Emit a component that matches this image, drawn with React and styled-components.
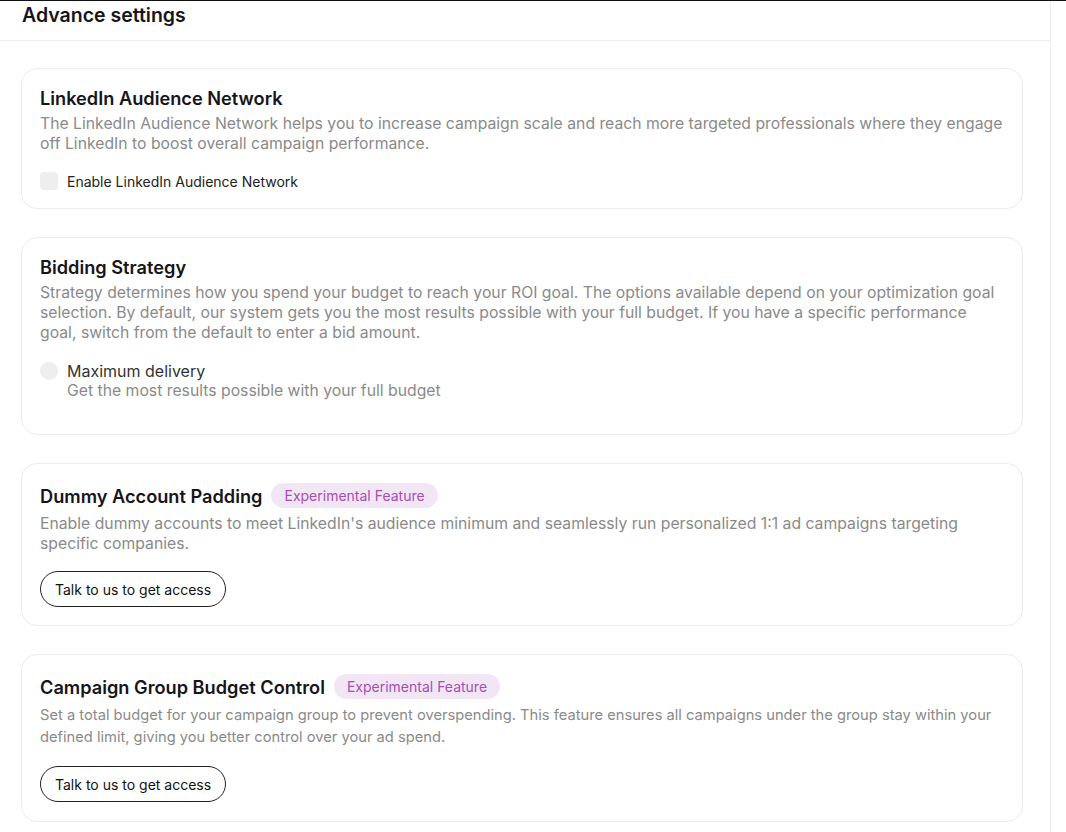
import styled, { createGlobalStyle } from "styled-components";

const GlobalStyle = createGlobalStyle`
  * { box-sizing: border-box; }
  body {
    margin: 0;
    background: #fff;
    font-family: Inter, "Noto Sans", sans-serif;
    color: #111;
    border-top: 1px solid #111;
  }
`;

const Panel = styled.div`
  width: 1051px;
  min-height: 832px;
  border-right: 1px solid #ececec;
`;

const Header = styled.div`
  height: 40px;
  padding: 1px 22px 0;
  border-bottom: 1px solid #ececec;
`;

const PageTitle = styled.h2`
  margin: 0;
  font-size: 19.5px;
  font-weight: 600;
  line-height: 26px;
  color: #15151a;
`;

const Body = styled.div`
  padding: 27px 27px 20px 21px;
  display: flex;
  flex-direction: column;
  gap: 28px;
`;

const Card = styled.section`
  border: 1px solid #ececec;
  border-radius: 16px;
  padding: ${(p) => p.$pad || "18px"};
`;

const TitleRow = styled.div`
  display: flex;
  align-items: center;
  gap: 9px;
`;

const Title = styled.h3`
  margin: 0;
  font-size: 18.2px;
  font-weight: 600;
  line-height: 22px;
  color: #15151a;
`;

const Badge = styled.span`
  background: #f2e6f4;
  color: #a54fb3;
  font-size: 14px;
  line-height: 25px;
  padding: 0 13px;
  border-radius: 13px;
`;

const Desc = styled.p`
  margin: ${(p) => p.$mt || "5px"} 0 0;
  font-size: ${(p) => p.$size || "15.75px"};
  line-height: ${(p) => p.$lh || "20px"};
  color: #8a8a8a;
`;

const CheckRow = styled.label`
  display: flex;
  align-items: center;
  gap: 9px;
  margin-top: 18px;
  font-size: 14px;
  color: #222;
`;

const Box = styled.span`
  width: 18px;
  height: 18px;
  border-radius: 4px;
  background: #eeeeee;
`;

const RadioRow = styled.div`
  display: flex;
  gap: 9px;
  margin-top: 18px;
`;

const Dot = styled.span`
  flex: none;
  width: 18px;
  height: 18px;
  margin-top: 1px;
  border-radius: 50%;
  background: #eeeeee;
`;

const OptionTitle = styled.div`
  font-size: 16px;
  line-height: 20px;
  color: #333;
`;

const OptionSub = styled.div`
  font-size: 15.75px;
  line-height: 20px;
  color: #8a8a8a;
`;

const AccessButton = styled.button`
  margin-top: ${(p) => p.$mt || "18px"};
  height: 36px;
  padding: 0 14px;
  border: 1px solid #222;
  border-radius: 18px;
  background: #fff;
  font-family: inherit;
  font-size: 14px;
  color: #111;
`;

export default function App() {
  return (
    <>
      <GlobalStyle />
      <Panel>
        <Header>
          <PageTitle>Advance settings</PageTitle>
        </Header>
        <Body>
          <Card>
            <Title>LinkedIn Audience Network</Title>
            <Desc>
              The LinkedIn Audience Network helps you to increase campaign scale and reach more targeted professionals where they engage
              off LinkedIn to boost overall campaign performance.
            </Desc>
            <CheckRow>
              <Box />
              Enable LinkedIn Audience Network
            </CheckRow>
          </Card>

          <Card $pad="18px 18px 33px">
            <Title>Bidding Strategy</Title>
            <Desc>
              Strategy determines how you spend your budget to reach your ROI goal. The options available depend on your optimization goal
              selection. By default, our system gets you the most results possible with your full budget. If you have a specific performance
              <br />
              goal, switch from the default to enter a bid amount.
            </Desc>
            <RadioRow>
              <Dot />
              <div>
                <OptionTitle>Maximum delivery</OptionTitle>
                <OptionSub>Get the most results possible with your full budget</OptionSub>
              </div>
            </RadioRow>
          </Card>

          <Card $pad="19px 18px 18px">
            <TitleRow>
              <Title>Dummy Account Padding</Title>
              <Badge>Experimental Feature</Badge>
            </TitleRow>
            <Desc $mt="6px">
              Enable dummy accounts to meet LinkedIn's audience minimum and seamlessly run personalized 1:1 ad campaigns targeting
              specific companies.
            </Desc>
            <AccessButton $mt="17px">Talk to us to get access</AccessButton>
          </Card>

          <Card $pad="19px 18px 19px">
            <TitleRow>
              <Title>Campaign Group Budget Control</Title>
              <Badge>Experimental Feature</Badge>
            </TitleRow>
            <Desc $size="14.7px" $lh="22px">
              Set a total budget for your campaign group to prevent overspending. This feature ensures all campaigns under the group stay within your
              defined limit, giving you better control over your ad spend.
            </Desc>
            <AccessButton>Talk to us to get access</AccessButton>
          </Card>
        </Body>
      </Panel>
    </>
  );
}
